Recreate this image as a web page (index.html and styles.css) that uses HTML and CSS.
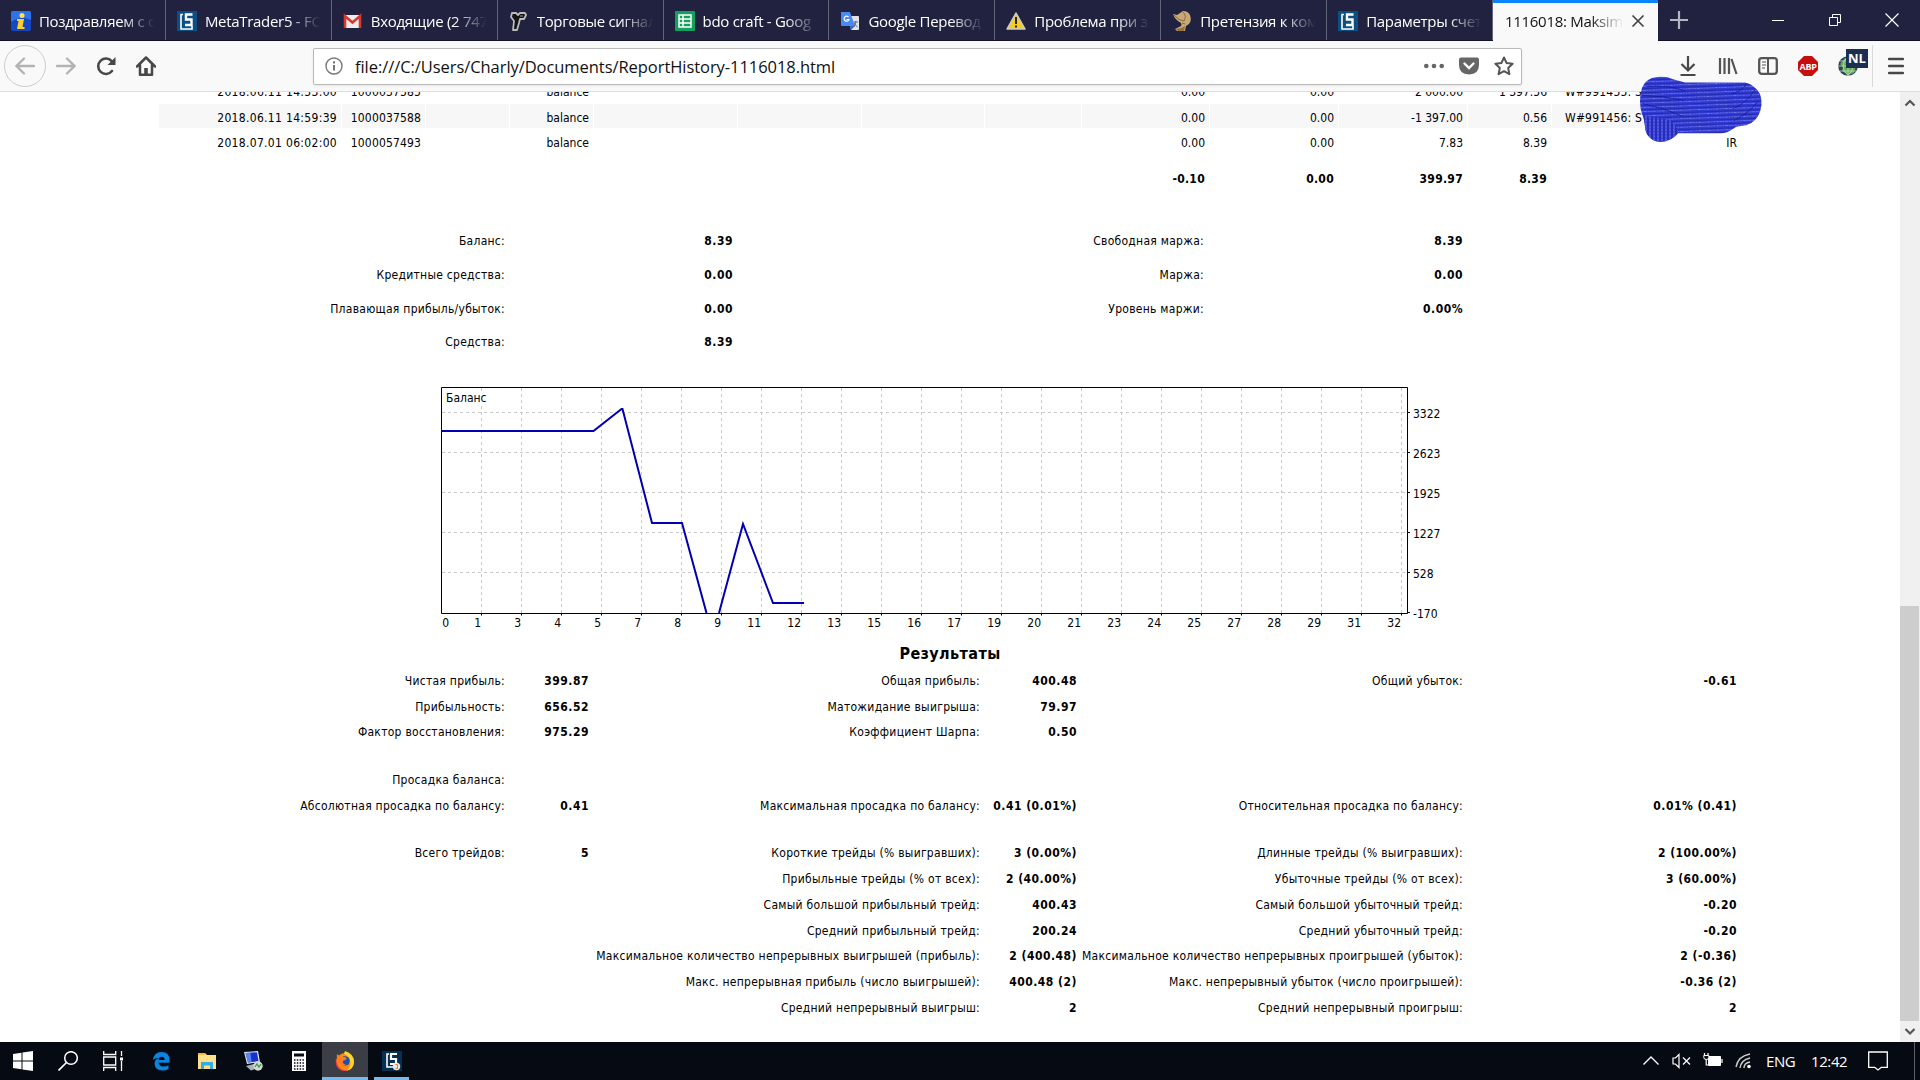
FILE: index.html
```html
<!DOCTYPE html>
<html lang="ru">
<head>
  <meta charset="UTF-8">
  <title>1116018: Maksim</title>
  <link rel="stylesheet" href="styles.css">
</head>
<body>
  <div class="tabs">
    <div class="tab">
      <svg class="favicon" viewBox="0 0 20 20"><rect width="20" height="20" rx="2" fill="#1848c0"/><path d="M0 2q0-2 2-2h16q2 0 2 2v7Q10 4 0 11z" fill="#2d74e8"/><circle cx="11" cy="4.500" r="2.500" fill="#ffe14a"/><path d="M6 8h7l-1.500 8h2v2H6l1.600-8H6z" fill="#ffd02c"/></svg>
      <span class="title">Поздравляем с о</span>
    </div>
    <div class="tab">
      <svg class="favicon" viewBox="0 0 20 20"><rect width="20" height="20" fill="#0c5083"/><path d="M6 3.500H4V18h11v-3" fill="none" stroke="#fff" stroke-width="1.600"/><path d="M15.500 3.500H9v5h5.500v5.500H8" fill="none" stroke="#fff" stroke-width="2.400"/></svg>
      <span class="title">MetaTrader5 - FO</span>
    </div>
    <div class="tab">
      <svg class="favicon" viewBox="0 0 20 20"><rect x="1" y="4" width="17" height="13" rx="1" fill="#eee"/><path d="M2 17V5l7.500 6.500L17 5v12" fill="none" stroke="#d9392c" stroke-width="2.600"/></svg>
      <span class="title">Входящие (2 747</span>
    </div>
    <div class="tab">
      <svg class="favicon" viewBox="0 0 20 20"><path d="M3 2h4l2 2 2-2h5l1 2-2 4h-4l-1 4-2 7H4l1-9-3-4z" fill="#151515" stroke="#bbb" stroke-width="1.800" stroke-linejoin="round"/><path d="M11 5h3" stroke="#999"/></svg>
      <span class="title">Торговые сигнал</span>
    </div>
    <div class="tab">
      <svg class="favicon" viewBox="0 0 20 20"><rect width="20" height="20" rx="1" fill="#12a05c"/><path d="M4 4h12v12H4zM4 8h12M4 12h12M8 4v12" fill="none" stroke="#fff" stroke-width="1.500"/></svg>
      <span class="title">bdo craft - Goog</span>
    </div>
    <div class="tab">
      <svg class="favicon" viewBox="0 0 20 20"><path d="M8 5h10q1 0 1 1v12q0 1-1 1h-7z" fill="#dfe3e8"/><path d="M1 1h9l5 14H2q-1 0-1-1z" fill="#4a8af4"/><path d="M11 19l-1-4h5z" fill="#3367c8"/><path d="M8.500 6A2.500 2.500 0 1 0 9 8.500H6.500" fill="none" stroke="#fff" stroke-width="1.200"/><path d="M13.500 11h4.500M15.700 10v1q-.5 3-2 5M14.500 12q1 3 3 4" fill="none" stroke="#667" stroke-width="1"/></svg>
      <span class="title">Google Перевод</span>
    </div>
    <div class="tab">
      <svg class="favicon" viewBox="0 0 20 20"><path d="M10 2l9 16H1z" fill="#f3cd1f" stroke="#c9ccd0" stroke-width="1.500" stroke-linejoin="round"/><path d="M10 6v7M10 14.500v2" stroke="#222" stroke-width="2"/></svg>
      <span class="title">Проблема при з</span>
    </div>
    <div class="tab">
      <svg class="favicon" viewBox="0 0 20 20"><path d="M1 3l4 1 6-4q5 0 7 4 2 5-1 9l-3 2-1 5H5l-2-2 6-3q1-1 0-3Q3 9 1 3z" fill="#c8a877"/><path d="M2 4q5 6 10 6 3-5-1-9M10 12l3 1" fill="none" stroke="#8a6c3e" stroke-width="1"/><path d="M4 18q5 0 9-3l-1 5H6z" fill="#94743c"/></svg>
      <span class="title">Претензия к ком</span>
    </div>
    <div class="tab">
      <svg class="favicon" viewBox="0 0 20 20"><rect width="20" height="20" fill="#0c5083"/><path d="M6 3.500H4V18h11v-3" fill="none" stroke="#fff" stroke-width="1.600"/><path d="M15.500 3.500H9v5h5.500v5.500H8" fill="none" stroke="#fff" stroke-width="2.400"/></svg>
      <span class="title">Параметры счет</span>
    </div>
    <div class="tab active">
      <span class="title">1116018: Maksim</span>
      <svg class="close" viewBox="0 0 14 14"><path d="M1.500 1.500l11 11M12.500 1.500l-11 11" stroke="#444" stroke-width="1.700"/></svg>
    </div>
    <svg class="new-tab" viewBox="0 0 18 18"><path d="M9 0v18M0 9h18" stroke="#b4b5c0" stroke-width="2.200"/></svg>
    <div class="window-buttons">
      <svg viewBox="0 0 14 14"><path d="M1 7.500h12" stroke="#fff"/></svg>
      <svg viewBox="0 0 14 14"><path d="M1.500 4.500h8v8h-8zM4.500 4V1.500h8v8H10" fill="none" stroke="#fff"/></svg>
      <svg viewBox="0 0 14 14"><path d="M.5 .5l13 13M13.500 .5l-13 13" stroke="#fff" stroke-width="1.200"/></svg>
    </div>
  </div>

  <div class="toolbar">
    <div class="nav-buttons">
      <div class="back"><svg viewBox="0 0 20 20"><path d="M19 10H2M9 2.500L1.500 10 9 17.500" fill="none" stroke="#b3b3b3" stroke-width="2.300" stroke-linecap="round"/></svg></div>
      <svg viewBox="0 0 20 20"><path d="M1 10h17M11 2.500l7.500 7.500-7.500 7.500" fill="none" stroke="#b3b3b3" stroke-width="2.300" stroke-linecap="round"/></svg>
      <svg viewBox="0 0 20 20"><path d="M16 15A7.700 7.700 0 1 1 16 5.500" fill="none" stroke="#484848" stroke-width="2.600" stroke-linecap="round"/><path d="M19.500 1v8h-8z" fill="#484848"/></svg>
      <svg viewBox="0 0 20 20"><path d="M1 10.500L10 1.500l9 9M4 9v9.800h12V9" fill="none" stroke="#484848" stroke-width="2.500" stroke-linejoin="round" stroke-linecap="round"/><path d="M8.200 18v-6h3.600v6z" fill="#484848"/></svg>
    </div>
    <div class="urlbar">
      <svg viewBox="0 0 20 20"><circle cx="10" cy="10" r="8" fill="none" stroke="#777" stroke-width="1.400"/><path d="M10 9v5.500M10 5.300v2.200" stroke="#777" stroke-width="2"/></svg>
      <span class="url">file:///C:/Users/Charly/Documents/ReportHistory-1116018.html</span>
      <div class="page-actions">
        <svg viewBox="0 0 20 20"><circle cx="2.300" cy="10" r="2.300" fill="#666"/><circle cx="10" cy="10" r="2.300" fill="#666"/><circle cx="17.700" cy="10" r="2.300" fill="#666"/></svg>
        <svg viewBox="0 0 20 20"><path d="M2 1.500h16q2 0 2 2V9q0 9-10 9.500Q0 18 0 9V3.500q0-2 2-2z" fill="#666"/><path d="M5.500 7.500L10 12l4.500-4.500" fill="none" stroke="#fff" stroke-width="2.400" stroke-linecap="round"/></svg>
        <svg viewBox="0 0 20 20"><path d="M10 1.500l2.600 5.600 6 .7-4.400 4.200 1.200 6.200L10 15.200l-5.400 3 1.200-6.200L1.400 7.800l6-.7z" fill="none" stroke="#555" stroke-width="2" stroke-linejoin="round"/></svg>
      </div>
    </div>
    <div class="tools">
      <svg viewBox="0 0 20 20"><path d="M10 0v14M3.500 8l6.500 6.500L16.500 8M2.500 19h15" fill="none" stroke="#484848" stroke-width="2.200"/></svg>
      <svg viewBox="0 0 20 20"><path d="M2 2v16M6.500 2v16M11 2v16M13.500 3l5 15" fill="none" stroke="#555" stroke-width="2.200"/></svg>
      <svg viewBox="0 0 20 20"><rect x="1.200" y="2.200" width="17.600" height="15.600" rx="2.500" fill="none" stroke="#555" stroke-width="2.300"/><path d="M10 2v16" stroke="#555" stroke-width="2"/><path d="M4 6h4M4 9h4M4 12h3" stroke="#555" stroke-width="1.200"/></svg>
      <div class="abp"><span>ABP</span></div>
      <div class="geo">
        <svg viewBox="0 0 20 20"><circle cx="10" cy="10" r="9.800" fill="#30425c"/><path d="M7 2l5-1 2 2v6l4 1-2 7-6 2-6-4 1-4-3-3z" fill="#5fae4d"/><path d="M10 0v20M0 10h20M1.500 5h17M1.500 15h17M10 .5Q0 10 10 19.500M10 .5Q20 10 10 19.500" fill="none" stroke="#c6d8cc" stroke-width=".8"/></svg>
        <span class="badge">NL</span>
      </div>
      <svg class="menu" viewBox="0 0 16 20"><path d="M1 3h14M1 10h14M1 17h14" stroke="#484848" stroke-width="2.400" stroke-linecap="round"/></svg>
    </div>
  </div>

  <div class="content">
    <div class="report">
      <div class="deal first"><div class="time">2018.06.11 14:53:00</div><div class="id">1000037585</div><div></div><div>balance</div><div></div><div></div><div></div><div></div><div>0.00</div><div>0.00</div><div>2 000.00</div><div>1 397.56</div><div class="comment">W#991455: S</div></div>
      <div class="deal odd"><div class="time">2018.06.11 14:59:39</div><div class="id">1000037588</div><div></div><div>balance</div><div></div><div></div><div></div><div></div><div>0.00</div><div>0.00</div><div>-1 397.00</div><div>0.56</div><div class="comment">W#991456: S</div></div>
      <div class="deal"><div class="time">2018.07.01 06:02:00</div><div class="id">1000057493</div><div></div><div>balance</div><div></div><div></div><div></div><div></div><div>0.00</div><div>0.00</div><div>7.83</div><div>8.39</div><div>IR</div></div>
      <div class="deal total"><div></div><div></div><div></div><div></div><div></div><div></div><div></div><div></div><div>-0.10</div><div>0.00</div><div>399.97</div><div>8.39</div><div></div></div>

      <div class="summary">
        <span>Баланс:</span><b>8.39</b><span>Свободная маржа:</span><b>8.39</b>
        <span>Кредитные средства:</span><b>0.00</b><span>Маржа:</span><b>0.00</b>
        <span>Плавающая прибыль/убыток:</span><b>0.00</b><span>Уровень маржи:</span><b>0.00%</b>
        <span>Средства:</span><b>8.39</b><span></span><b></b>
      </div>

      <svg class="chart" width="1020" height="245" viewBox="0 0 1020 245">
        <path class="grid" d="M40.500 1v226M80.500 1v226M120.500 1v226M160.500 1v226M200.500 1v226M240.500 1v226M280.500 1v226M320.500 1v226M360.500 1v226M400.500 1v226M440.500 1v226M480.500 1v226M520.500 1v226M560.500 1v226M600.500 1v226M640.500 1v226M680.500 1v226M720.500 1v226M760.500 1v226M800.500 1v226M840.500 1v226M880.500 1v226M920.500 1v226M960.500 1v226"/>
        <path class="grid" d="M1 25.500h965M1 65.500h965M1 105.500h965M1 145.500h965M1 185.500h965"/>
        <rect class="mask" x="4" y="4" width="42" height="13"/>
        <path class="axis" d="M.5 .5h966v226H.5zM967 25.500h2M967 65.500h2M967 105.500h2M967 145.500h2M967 185.500h2M967 225.500h2M40.500 227v1.500M80.500 227v1.500M120.500 227v1.500M160.500 227v1.500M200.500 227v1.500M240.500 227v1.500M280.500 227v1.500M320.500 227v1.500M360.500 227v1.500M400.500 227v1.500M440.500 227v1.500M480.500 227v1.500M520.500 227v1.500M560.500 227v1.500M600.500 227v1.500M640.500 227v1.500M680.500 227v1.500M720.500 227v1.500M760.500 227v1.500M800.500 227v1.500M840.500 227v1.500M880.500 227v1.500M920.500 227v1.500M960.500 227v1.500"/>
        <path class="line" d="M1 44h151.500l28-22h1l29.500 114H241l24.500 90M278 226l24-89 30 79H363"/>
        <text x="5" y="15">Баланс</text>
        <g class="ticks">
          <text x="8" y="240">0</text><text x="40" y="240">1</text><text x="80" y="240">3</text><text x="120" y="240">4</text><text x="160" y="240">5</text>
          <text x="200" y="240">7</text><text x="240" y="240">8</text><text x="280" y="240">9</text><text x="320" y="240">11</text><text x="360" y="240">12</text>
          <text x="400" y="240">13</text><text x="440" y="240">15</text><text x="480" y="240">16</text><text x="520" y="240">17</text><text x="560" y="240">19</text>
          <text x="600" y="240">20</text><text x="640" y="240">21</text><text x="680" y="240">23</text><text x="720" y="240">24</text><text x="760" y="240">25</text>
          <text x="800" y="240">27</text><text x="840" y="240">28</text><text x="880" y="240">29</text><text x="920" y="240">31</text><text x="960" y="240">32</text>
        </g>
        <text x="972" y="31">3322</text><text x="972" y="71">2623</text><text x="972" y="111">1925</text>
        <text x="972" y="151">1227</text><text x="972" y="191">528</text><text x="972" y="231">-170</text>
      </svg>

      <h2>Результаты</h2>

      <div class="results">
        <span>Чистая прибыль:</span><b>399.87</b><span>Общая прибыль:</span><b>400.48</b><span>Общий убыток:</span><b>-0.61</b>
        <span>Прибыльность:</span><b>656.52</b><span>Матожидание выигрыша:</span><b>79.97</b><span></span><b></b>
        <span>Фактор восстановления:</span><b>975.29</b><span>Коэффициент Шарпа:</span><b>0.50</b><span></span><b></b>
      </div>
      <div class="results">
        <span>Просадка баланса:</span><b></b><span></span><b></b><span></span><b></b>
        <span>Абсолютная просадка по балансу:</span><b>0.41</b><span>Максимальная просадка по балансу:</span><b>0.41 (0.01%)</b><span>Относительная просадка по балансу:</span><b>0.01% (0.41)</b>
      </div>
      <div class="results">
        <span>Всего трейдов:</span><b>5</b><span>Короткие трейды (% выигравших):</span><b>3 (0.00%)</b><span>Длинные трейды (% выигравших):</span><b>2 (100.00%)</b>
        <span></span><b></b><span>Прибыльные трейды (% от всех):</span><b>2 (40.00%)</b><span>Убыточные трейды (% от всех):</span><b>3 (60.00%)</b>
        <span></span><b></b><span>Самый большой прибыльный трейд:</span><b>400.43</b><span>Самый большой убыточный трейд:</span><b>-0.20</b>
        <span></span><b></b><span>Средний прибыльный трейд:</span><b>200.24</b><span>Средний убыточный трейд:</span><b>-0.20</b>
        <span></span><b></b><span>Максимальное количество непрерывных выигрышей (прибыль):</span><b>2 (400.48)</b><span>Максимальное количество непрерывных проигрышей (убыток):</span><b>2 (-0.36)</b>
        <span></span><b></b><span>Макс. непрерывная прибыль (число выигрышей):</span><b>400.48 (2)</b><span>Макс. непрерывный убыток (число проигрышей):</span><b>-0.36 (2)</b>
        <span></span><b></b><span>Средний непрерывный выигрыш:</span><b>2</b><span>Средний непрерывный проигрыш:</span><b>2</b>
      </div>
    </div>
    <div class="scrollbar">
      <svg viewBox="0 0 20 20"><path d="M5.500 13L10 8.500l4.500 4.500" fill="none" stroke="#555" stroke-width="2.200"/></svg>
      <div class="thumb"></div>
      <svg viewBox="0 0 20 20"><path d="M5.500 7.500L10 12l4.500-4.500" fill="none" stroke="#555" stroke-width="2.200"/></svg>
    </div>
  </div>

  <div class="taskbar">
    <div class="apps">
      <div class="app"><svg viewBox="0 0 20 20"><path d="M0 3l8.500-1.200v7.700H0zM9.500 1.600L20 0v9.500H9.500zM0 10.500h8.500v7.700L0 17zM9.500 10.500H20V20L9.500 18.400z" fill="#fff"/></svg></div>
      <div class="app"><svg viewBox="0 0 20 20"><circle cx="13" cy="7" r="6.300" fill="none" stroke="#fff" stroke-width="1.500"/><path d="M8.500 11.500L.5 19.500" stroke="#fff" stroke-width="1.700"/></svg></div>
      <div class="app"><svg viewBox="0 0 20 20"><path d="M.7 0v3.500h12V0M.7 6h12v8H.7zM.7 20v-3.500h12V20M18.500 0v5M18.500 10v10" fill="none" stroke="#fff" stroke-width="1.300"/><path d="M17 6.500h3v3h-3z" fill="#fff"/></svg></div>
      <div class="app edge"><svg viewBox="0 0 20 20"><path d="M2 9Q3 1 10.500 1q8 0 8 8v2.800H7.500q.5 3.700 5 3.700 3 0 5-1.300V18q-2.500 1.500-6 1.500-7.500 0-8-7 .3-4 4-5.500Q4.500 6.500 2 9zm5.600 0h6q0-3.300-2.900-3.300T7.600 9z" fill="#0a84dc"/></svg></div>
      <div class="app"><svg viewBox="0 0 20 20"><path d="M1 2h7l2 2h9v14H1z" fill="#ffe08a"/><path d="M1 2h7v2H1z" fill="#f5b73c"/><path d="M4 18v-7h12v7h-3v-3.500H7V18z" fill="#35abe2"/></svg></div>
      <div class="app"><svg viewBox="0 0 20 20"><path d="M1 1l14-1 2 11-13 2z" fill="#e2e6ee"/><path d="M2.500 2l11.500-.7 1.500 9-10.500 1.300z" fill="#1533cc"/><path d="M2.500 2l5-.3 1 9.500-3.500.4z" fill="#5b85ee"/><path d="M3 15l8-2 4 4-7 2.500z" fill="#aab2bd"/><circle cx="15" cy="15" r="4.700" fill="#d5dcd5"/><path d="M12 16l2-3 2 3 2-3" fill="none" stroke="#3d9950" stroke-width="1.300"/></svg></div>
      <div class="app"><svg viewBox="0 0 20 20"><path d="M3 0h14v20H3z" fill="#fff"/><path d="M5 2.500h10v3H5z" fill="#060b13"/><path d="M5 9h10M5 12h10M5 15h10M5 18h10" stroke="#060b13" stroke-width="1.500" stroke-dasharray="1.500 1.300"/></svg></div>
      <div class="app current"><svg viewBox="0 0 20 20"><circle cx="10" cy="11" r="9" fill="#ff8a16"/><path d="M10 0q9 3 9 10.500 0 8-8 9.300 6-4 4-10-1-4-6-7z" fill="#ffd52a"/><path d="M1 7q1 13 12 12.500-7 2-11-3.500Q0 12 1 7z" fill="#e83450"/><circle cx="10" cy="10" r="4.800" fill="#1c50b8"/><path d="M2 3l4 3h4l2 2-4 2q-1 3 4 4-5 2-8-1.500Q1 8 2 3z" fill="#ff7b1c"/></svg></div>
      <div class="app running"><svg viewBox="0 0 20 20"><rect width="20" height="20" fill="#05304f"/><path d="M7 3H5v13h6" fill="none" stroke="#fff" stroke-width="1.600"/><path d="M15 3H9v5h5v5H8" fill="none" stroke="#fff" stroke-width="2.200"/><circle cx="14.500" cy="15.500" r="3.700" fill="#e8e8e8"/><path d="M13.500 13.500h2v4h-2" fill="none" stroke="#e3812b"/></svg></div>
    </div>
    <div class="tray">
      <svg width="18" height="20" viewBox="0 0 18 20"><path d="M1.500 13.500L9 6l7.500 7.500" fill="none" stroke="#fff" stroke-width="1.300"/></svg>
      <svg width="19" height="20" viewBox="0 0 19 20"><path d="M1 7h2.500L7 3.500v13L3.500 13H1z" fill="none" stroke="#fff" stroke-width="1.200"/><path d="M11 6.500l7 7M18 6.500l-7 7" stroke="#fff" stroke-width="1.200"/></svg>
      <svg width="20" height="20" viewBox="0 0 20 20"><path d="M5.500 5.500h12v9h-12z" fill="#fff" stroke="#fff"/><path d="M19 8v4M1.500 2v3M5 2v3M3.200 8v6H5" stroke="#fff" stroke-width="1.200" fill="none"/><path d="M.8 4.500h5v2q0 2-2.500 2t-2.500-2z" fill="#0a1018" stroke="#fff"/></svg>
      <svg width="17" height="20" viewBox="0 0 17 20"><path d="M1 16Q3 5 15 3M5 17Q6 9 15 7M9 17q0-5 6-6" fill="none" stroke="#ccc" stroke-width="1.400"/><circle cx="14" cy="15.500" r="1.800" fill="#fff"/></svg>
      <span class="lang">ENG</span>
      <span class="clock">12:42</span>
      <svg width="20" height="20" viewBox="0 0 20 20"><path d="M.7 1h18.600v15.300h-6L10 19l-3.300-2.700h-6z" fill="none" stroke="#fff" stroke-width="1.300"/></svg>
      <div class="desktop"></div>
    </div>
  </div>

  <!-- marker strokes over the account owner's name -->
  <svg class="scribble" width="130" height="70" viewBox="0 0 130 66" preserveAspectRatio="none">
    <defs>
      <pattern id="wave" width="9" height="4" patternUnits="userSpaceOnUse" patternTransform="rotate(-2)">
        <rect width="9" height="4" fill="#333dd2"/>
        <path d="M0 1h9" stroke="#1c21a8" stroke-width=".8"/>
        <path d="M0 2.800h9" stroke="#6f78ea" stroke-width=".9" stroke-dasharray="1.500 1"/>
      </pattern>
      <pattern id="stripe" width="4" height="9" patternUnits="userSpaceOnUse">
        <rect width="4" height="9" fill="#333dd2"/>
        <path d="M1 0v9" stroke="#161aa0" stroke-width=".9"/>
        <path d="M3 0v9" stroke="#7a82f0" stroke-width=".8" stroke-dasharray="2 1"/>
      </pattern>
    </defs>
    <path d="M7 12Q11 3 22 2q9-1 16 2l12 3h60q10 2 15 11 4 10-2 21-6 9-17 9-5 0-8 3-6 4-12 4H43q-2 3-8 6-8 4-16 1-8-4-9-12 0-8-3-13-4-12 0-25z" fill="url(#wave)"/>
    <path d="M8 37q8 4 14 3 8 1 13 3 5 3 8 10-3 6-10 8-8 3-15 0-8-4-8-13z" fill="url(#stripe)"/>
    <path d="M8 27q20 4 40 12M7 19q22 1 42 5M12 11q20-2 38 4M120 14q-8 12-22 18M123 25q-8 10-24 18M112 8q-6 8-16 10" fill="none" stroke="#141898" stroke-width=".7"/>
  </svg>
</body>
</html>
```

FILE: styles.css
```css
* { box-sizing: border-box; }
body { margin: 0; width: 1920px; height: 1080px; overflow: hidden; display: flex; flex-direction: column; background: #fff; font-family: "Open Sans", "Noto Sans", sans-serif; }
svg { display: block; flex: none; }

/* tab strip */
.tabs { height: 41px; display: flex; align-items: center; background: #20223f; border-bottom: 1px solid #10112b; color: #fff; }
.tab { width: 165.900px; height: 40px; flex: none; display: flex; align-items: center; padding: 2px 8px 0 11px; border-right: 1px solid #63647a; }
.favicon { width: 20px; height: 20px; margin-right: 8px; }
.title { flex: 1; white-space: nowrap; font-size: 15px; line-height: 22px; letter-spacing: -0.3px; -webkit-mask-image: linear-gradient(to right, #000 70%, transparent 98%); mask-image: linear-gradient(to right, #000 70%, transparent 98%); }
.tab.active { width: 165px; height: 41px; align-self: flex-start; padding: 0 13px 2px 12px; background: #f9f9f9; border-right: 0; border-top: 3px solid #0a84ff; color: #111; }
.close { width: 14px; height: 14px; margin-left: 5px; }
.new-tab { width: 18px; height: 18px; margin-left: 12px; }
.window-buttons { margin-left: auto; margin-right: 21px; display: flex; gap: 43px; }
.window-buttons svg { width: 14px; height: 14px; }

/* toolbar */
.toolbar { height: 51px; display: flex; align-items: center; background: #f9f9f9; border-bottom: 1px solid #ddd; }
.nav-buttons { width: 313px; display: flex; align-items: center; padding-left: 4px; }
.nav-buttons svg { width: 20px; height: 20px; }
.back { width: 42px; height: 42px; border: 1px solid #ccc; border-radius: 50%; display: flex; align-items: center; justify-content: center; margin-right: 10px; }
.nav-buttons > svg { margin-right: 20px; }
.urlbar { width: 1209px; height: 37px; display: flex; align-items: center; padding: 0 7px 0 10px; background: #fff; border: 1px solid #b9b9b9; border-radius: 2px; box-shadow: 0 1px 3px rgba(0,0,0,.08); }
.urlbar svg { width: 20px; height: 20px; }
.url { margin-left: 11px; font-size: 16.500px; letter-spacing: -0.060px; color: #111; white-space: nowrap; }
.page-actions { margin-left: auto; display: flex; gap: 15px; }
.tools { flex: 1; display: flex; align-items: center; padding-left: 156px; gap: 20px; }
.tools svg { width: 20px; height: 20px; }
.abp { width: 20px; height: 20px; background: #c70d0e; display: flex; align-items: center; justify-content: center; clip-path: polygon(30% 0, 70% 0, 100% 30%, 100% 70%, 70% 100%, 30% 100%, 0 70%, 0 30%); }
.abp span { font-size: 9px; font-weight: bold; color: #fff; letter-spacing: -0.3px; }
.geo { position: relative; width: 35px; height: 42px; display: flex; align-items: center; border-right: 1px solid #d8d8d8; }
.badge { position: absolute; left: 8px; top: 4px; width: 22px; height: 19px; background: #1d2f50; color: #fff; font-size: 13px; font-weight: bold; line-height: 18px; text-align: center; }
.tools .menu { width: 16px; margin-left: -5px; }

/* report */
.content { height: 950px; display: flex; overflow: hidden; font-family: "DejaVu Sans Condensed", "DejaVu Sans", sans-serif; font-stretch: condensed; font-size: 12px; color: #000; }
.report { width: 1582px; margin-left: 159px; }
.deal { height: 24px; margin-bottom: 1px; display: grid; grid-template-columns: 182px 83px 83px 83px 143px 123px 122px 96px 127px 128px 128px 83px 189px; gap: 1px; text-align: right; line-height: 20px; white-space: nowrap; }
.deal div { padding: 4px 4px 0 0; }
.deal .time { letter-spacing: 0.320px; }
.deal .id { letter-spacing: 0.150px; }
.deal.first { margin-top: -14px; margin-bottom: 2px; }
.deal.odd div { background: #f7f7f7; }
.deal.total { margin-top: 12px; font-weight: bold; letter-spacing: 0.300px; }
.deal .comment { text-align: left; padding-left: 13px; letter-spacing: 0.200px; }
.summary { display: grid; grid-template-columns: 346px 228px 471px 259px; grid-auto-rows: 33.750px; margin-top: 35px; line-height: 34px; text-align: right; white-space: nowrap; }
.summary span, .results span { letter-spacing: 0.270px; }
.summary b, .results b { letter-spacing: 0.500px; }
.chart { margin-left: 282px; margin-top: 28px; font-size: 12px; }
.grid { fill: none; stroke: #c8c8c8; stroke-dasharray: 3 3; }
.axis { fill: none; stroke: #000; }
.line { fill: none; stroke: #0000b0; stroke-width: 2; }
.mask { fill: #fff; }
.ticks { text-anchor: end; }
h2 { margin: 10px 0 2px; text-align: center; font-size: 16px; line-height: 24px; letter-spacing: 0.400px; }
.results { display: grid; grid-template-columns: 346px 84px 391px 97px 386px 274px; grid-auto-rows: 25.700px; margin-bottom: 22px; line-height: 26px; text-align: right; white-space: nowrap; }

.scrollbar { width: 20px; margin-left: auto; background: #f0f0f0; display: flex; flex-direction: column; justify-content: space-between; }
.scrollbar svg { width: 20px; height: 21px; }
.thumb { width: 19px; height: 415px; margin-top: auto; background: #cdcdcd; }

/* taskbar */
.taskbar { height: 38px; display: flex; justify-content: space-between; background: #060b13; color: #fff; }
.apps { display: flex; }
.app { width: 46px; height: 38px; flex: none; display: flex; align-items: center; justify-content: center; }
.app svg { width: 20px; height: 20px; }
.app:nth-child(-n+3) { width: 45px; }
.app.edge { margin-left: 3px; }
.app.current { background: #3b3f45; border-bottom: 3px solid #76b9ed; padding-top: 3px; }
.app.running { width: 35px; margin-left: 6px; border-bottom: 3px solid #76b9ed; padding-top: 3px; }
.tray { display: flex; align-items: center; font-size: 15px; letter-spacing: -0.4px; }
.tray svg { margin-right: 12px; }
.lang { margin-left: 2px; width: 45px; }
.clock { width: 57px; }
.tray .desktop { width: 6px; height: 38px; margin-left: 14px; border-left: 1px solid #5c6066; }

.scribble { position: absolute; left: 1635px; top: 75px; }
```
